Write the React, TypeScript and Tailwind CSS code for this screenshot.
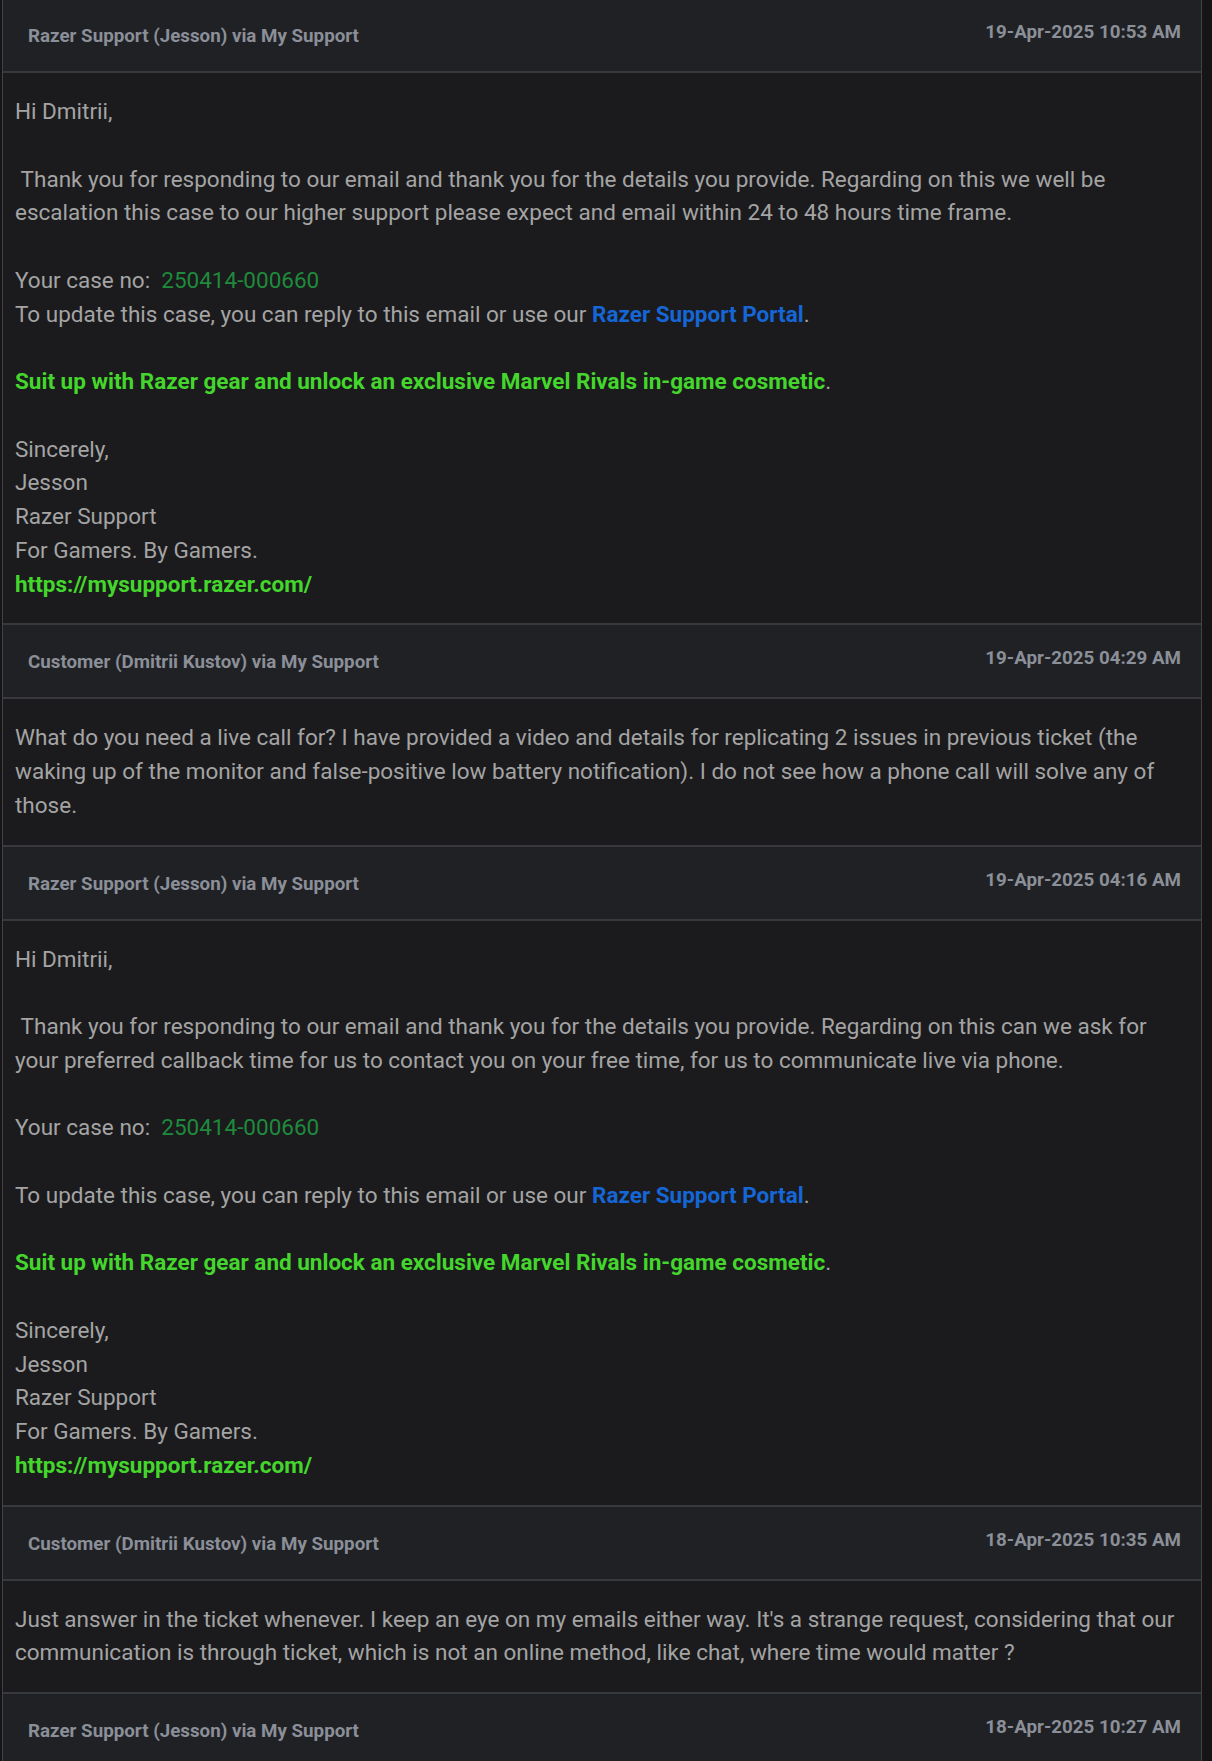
import React from "react"

type Msg = {
    from: string
    date: string
    body?: React.ReactNode
}

const Green = ({ children }: { children: React.ReactNode }) => (
    <span className="font-bold text-[#44d62c]">{children}</span>
)

const Portal = () => (
    <>
        To update this case, you can reply to this email or use our{" "}
        <span className="font-bold text-[#1566d6]">Razer Support Portal</span>.
    </>
)

const CaseNo = () => (
    <>
        Your case no:{"\u00a0 "}
        <span className="text-[#1f8a3c]">250414-000660</span>
    </>
)

const Signature = () => (
    <>
        <p>Sincerely,</p>
        <p>Jesson</p>
        <p>Razer Support</p>
        <p>For Gamers. By Gamers.</p>
        <p><Green>https://mysupport.razer.com/</Green></p>
    </>
)

const Blank = () => <p>&nbsp;</p>

const messages: Msg[] = [
    {
        from: "Razer Support (Jesson) via My Support",
        date: "19-Apr-2025 10:53 AM",
        body: (
            <>
                <p>Hi Dmitrii,</p>
                <Blank />
                <p>
                    {"\u00a0"}Thank you for responding to our email and thank you for the details you provide. Regarding on this we well be
                    escalation this case to our higher support please expect and email within 24 to 48 hours time frame.
                </p>
                <Blank />
                <p><CaseNo /></p>
                <p><Portal /></p>
                <Blank />
                <p><Green>Suit up with Razer gear and unlock an exclusive Marvel Rivals in-game cosmetic</Green>.</p>
                <Blank />
                <Signature />
            </>
        ),
    },
    {
        from: "Customer (Dmitrii Kustov) via My Support",
        date: "19-Apr-2025 04:29 AM",
        body: (
            <p>
                What do you need a live call for? I have provided a video and details for replicating 2 issues in previous ticket (the
                waking up of the monitor and false-positive low battery notification). I do not see how a phone call will solve any of
                those.
            </p>
        ),
    },
    {
        from: "Razer Support (Jesson) via My Support",
        date: "19-Apr-2025 04:16 AM",
        body: (
            <>
                <p>Hi Dmitrii,</p>
                <Blank />
                <p>
                    {"\u00a0"}Thank you for responding to our email and thank you for the details you provide. Regarding on this can we ask for
                    your preferred callback time for us to contact you on your free time, for us to communicate live via phone.
                </p>
                <Blank />
                <p><CaseNo /></p>
                <Blank />
                <p><Portal /></p>
                <Blank />
                <p><Green>Suit up with Razer gear and unlock an exclusive Marvel Rivals in-game cosmetic</Green>.</p>
                <Blank />
                <Signature />
            </>
        ),
    },
    {
        from: "Customer (Dmitrii Kustov) via My Support",
        date: "18-Apr-2025 10:35 AM",
        body: (
            <p>
                Just answer in the ticket whenever. I keep an eye on my emails either way. It's a strange request, considering that our
                communication is through ticket, which is not an online method, like chat, where time would matter ?
            </p>
        ),
    },
    {
        from: "Razer Support (Jesson) via My Support",
        date: "18-Apr-2025 10:27 AM",
    },
]

export default function App() {
    return (
        <div className="min-h-screen w-full bg-[#151517] font-['Roboto',sans-serif]">
            <div className="-mt-[1px] ml-[2px] w-[1200px] border-x border-[#434346]">
                {messages.map((m, i) => (
                    <div key={i}>
                        <div className="flex h-[74px] items-start justify-between border-b-2 border-[#38393c] bg-[#202125] pl-[25px] pr-[20px] pt-[22px] text-[18.75px] font-bold leading-[22px] text-[#8b8f98]">
                            <div className="mt-[4px]">{m.from}</div>
                            <div>{m.date}</div>
                        </div>
                        {m.body && (
                            <div className="border-b-2 border-[#38393c] bg-[#1b1b1d] px-[12px] py-[22px] text-[22.5px] leading-[33.75px] text-[#a4a4a4]">
                                {m.body}
                            </div>
                        )}
                    </div>
                ))}
            </div>
        </div>
    )
}
